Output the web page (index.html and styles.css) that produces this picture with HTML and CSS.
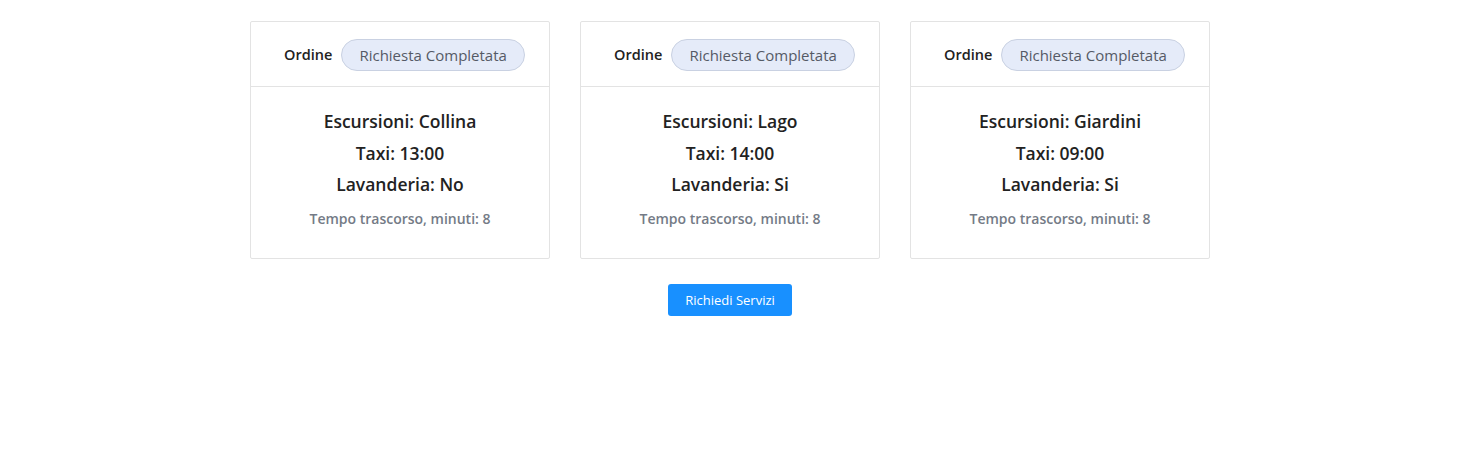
FILE: index.html
```html
<!DOCTYPE html>
<html lang="it">
<head>
<meta charset="utf-8">
<link rel="stylesheet" href="styles.css">
</head>
<body>
<div class="page">
  <div class="cards">
    <div class="card">
      <div class="card-head"><span class="label">Ordine</span><span class="pill">Richiesta Completata</span></div>
      <div class="card-body">
        <p class="line">Escursioni: Collina</p>
        <p class="line">Taxi: 13:00</p>
        <p class="line">Lavanderia: No</p>
        <p class="time">Tempo trascorso, minuti: 8</p>
      </div>
    </div>
    <div class="card">
      <div class="card-head"><span class="label">Ordine</span><span class="pill">Richiesta Completata</span></div>
      <div class="card-body">
        <p class="line">Escursioni: Lago</p>
        <p class="line">Taxi: 14:00</p>
        <p class="line">Lavanderia: Si</p>
        <p class="time">Tempo trascorso, minuti: 8</p>
      </div>
    </div>
    <div class="card">
      <div class="card-head"><span class="label">Ordine</span><span class="pill">Richiesta Completata</span></div>
      <div class="card-body">
        <p class="line">Escursioni: Giardini</p>
        <p class="line">Taxi: 09:00</p>
        <p class="line">Lavanderia: Si</p>
        <p class="time">Tempo trascorso, minuti: 8</p>
      </div>
    </div>
  </div>
  <div class="actions"><button class="btn">Richiedi Servizi</button></div>
</div>
</body>
</html>
```
FILE: styles.css
```css
* { box-sizing: border-box; }
html, body { margin: 0; background: #fff; }
body {
  font-family: "Open Sans", "Noto Sans", sans-serif;
  color: #212529;
}
.page {
  width: 1460px;
  padding-top: 21px;
}
.cards {
  display: flex;
  justify-content: center;
  gap: 30px;
}
.card {
  width: 300px;
  border: 1px solid #e3e3e3;
  border-radius: 2px;
}
.card-head {
  height: 65px;
  border-bottom: 1px solid #e3e3e3;
  display: flex;
  align-items: center;
  justify-content: center;
  gap: 9px;
  padding: 1px 0 0 9px;
}
.label {
  font-size: 14.5px;
  font-weight: 600;
  color: #222;
}
.pill {
  height: 32px;
  display: inline-flex;
  align-items: center;
  padding: 0 17px;
  border-radius: 16px;
  background: #e5ebf9;
  border: 1px solid #c9d1e2;
  font-size: 15px;
  color: #555a66;
}
.card-body {
  padding: 19px 10px 29px;
  text-align: center;
}
.line {
  margin: 0;
  font-size: 17.5px;
  font-weight: 600;
  line-height: 31.5px;
  color: #222;
}
.time {
  margin: 8px 0 0;
  font-size: 14px;
  font-weight: 600;
  line-height: 20px;
  color: #747b86;
}
.actions {
  display: flex;
  justify-content: center;
  margin-top: 25px;
}
.btn {
  height: 32px;
  width: 124px;
  border: 0;
  border-radius: 3px;
  background: #1890ff;
  color: #fff;
  font-family: "Open Sans", "Noto Sans", sans-serif;
  font-size: 13px;
}
```
